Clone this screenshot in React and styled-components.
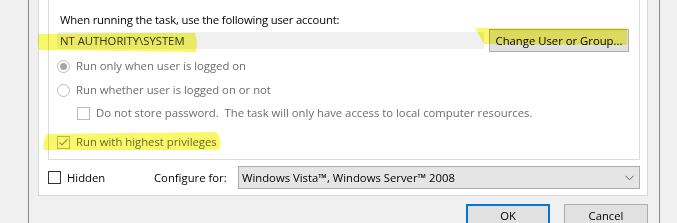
// Packages
import styled, { createGlobalStyle } from "styled-components";

const GlobalStyle = createGlobalStyle`
    body {
        margin: 0;
        background: #f0f0f0;
        font-family: "Segoe UI", "Open Sans", sans-serif;
        font-size: 11.3px;
        color: #000;
    }
`;

// Chevron for the combo box
const Chevron = () => (
    <svg width="9" height="6" viewBox="0 0 9 6">
        <path d="M0.5 0.8 L4.5 4.8 L8.5 0.8" fill="none" stroke="#606060" strokeWidth="1" />
    </svg>
);

// Check mark for a ticked box
const Tick = ({ color }) => (
    <svg width="11" height="11" viewBox="0 0 11 11">
        <path d="M1.5 5.5 L4 8 L9.5 2.2" fill="none" stroke={color} strokeWidth="1.2" />
    </svg>
);

// Yellow marker strokes laid over the dialog
const Highlights = () => (
    <Marker width="677" height="223" viewBox="0 0 677 223">
        <path d="M38 34 L120 33 L195 33 Q198 42 196 52 L120 51 L39 50 Q37 42 38 34 Z" />
        <path d="M475 28 L627 28 L627 45 L484 44 Z" />
        <path d="M47 134 L216 132 Q223 140 219 150 L44 150 Q42 142 47 134 Z" />
    </Marker>
);

export default function App() {
    return (
        <>
            <GlobalStyle />
            <Screen>
                <Window>
                    <TabPage>
                        <GroupBox>
                            <Heading>When running the task, use the following user account:</Heading>
                            <AccountRow>
                                <AccountField>NT AUTHORITY\SYSTEM</AccountField>
                                <Button $width="140px">Change User or Group...</Button>
                            </AccountRow>
                            <Option $top="6px" $disabled>
                                <Radio $checked />
                                Run only when user is logged on
                            </Option>
                            <Option $top="8px" $disabled>
                                <Radio />
                                Run whether user is logged on or not
                            </Option>
                            <Option $top="7px" $indent="20px" $disabled>
                                <Box $disabled />
                                Do not store password.&nbsp; The task will only have access to local computer resources.
                            </Option>
                            <Option $top="13px" $disabled>
                                <Box $disabled>
                                    <Tick color="#9a9a9a" />
                                </Box>
                                Run with highest privileges
                            </Option>
                        </GroupBox>
                        <BottomRow>
                            <Option>
                                <Box />
                                Hidden
                            </Option>
                            <span>Configure for:</span>
                            <Select>
                                Windows Vista™, Windows Server™ 2008
                                <Chevron />
                            </Select>
                        </BottomRow>
                    </TabPage>
                    <ButtonRow>
                        <Button $width="84px" $primary>OK</Button>
                        <Button $width="84px">Cancel</Button>
                    </ButtonRow>
                </Window>
                <Highlights />
            </Screen>
        </>
    );
}

const Screen = styled.div`
    position: relative;
    width: 677px;
    height: 223px;
    overflow: hidden;
    box-sizing: border-box;
    padding-left: 28px;
    background: #f0f0f0;
`;

const Window = styled.div`
    width: 632px;
    height: 100%;
    box-sizing: border-box;
    border-left: 1px solid #8a8a8a;
    border-right: 1px solid #8a8a8a;
    padding: 0 11px 0 9px;
    display: flex;
    flex-direction: column;
`;

const TabPage = styled.div`
    background: #fff;
    border: 1px solid #d9d9d9;
    border-top: none;
    padding: 0 7px 6px 9px;
`;

const GroupBox = styled.div`
    border: 1px solid #dcdcdc;
    border-top: none;
    padding: 11px 10px 9px 8px;
    display: flex;
    flex-direction: column;
`;

const Heading = styled.div`
    margin-left: 3px;
    height: 16px;
    line-height: 17px;
    letter-spacing: -0.18px;
`;

const AccountRow = styled.div`
    margin-top: 2px;
    display: flex;
    align-items: center;
    gap: 5px;
`;

const AccountField = styled.div`
    flex: 1;
    height: 17px;
    line-height: 17px;
    padding-left: 3px;
    background: #f0f0f0;
    color: #333;
`;

const Option = styled.div`
    margin-top: ${(p) => p.$top || "0"};
    margin-left: ${(p) => p.$indent || "0"};
    display: flex;
    align-items: center;
    gap: 6px;
    height: 16px;
    line-height: 16px;
    color: ${(p) => (p.$disabled ? "#6d6d6d" : "#000")};
    white-space: nowrap;
`;

const Radio = styled.span`
    width: 13px;
    height: 13px;
    box-sizing: border-box;
    border: 1px solid #bcbcbc;
    border-radius: 50%;
    background: #fff;
    display: grid;
    place-items: center;

    &::after {
        content: "";
        display: ${(p) => (p.$checked ? "block" : "none")};
        width: 7px;
        height: 7px;
        border-radius: 50%;
        background: #a6a6a6;
    }
`;

const Box = styled.span`
    width: 13px;
    height: 13px;
    box-sizing: border-box;
    border: 1px solid ${(p) => (p.$disabled ? "#bcbcbc" : "#333")};
    background: #fff;
    display: grid;
    place-items: center;
`;

const BottomRow = styled.div`
    margin-top: 6px;
    height: 23px;
    display: grid;
    grid-template-columns: 106px 84px 1fr;
    align-items: center;
`;

const Select = styled.div`
    height: 23px;
    box-sizing: border-box;
    border: 1px solid #adadad;
    background: #e5e5e5;
    padding: 0 5px 0 3px;
    display: flex;
    align-items: center;
    justify-content: space-between;
`;

const ButtonRow = styled.div`
    margin-top: 8px;
    display: flex;
    justify-content: flex-end;
    gap: 14px;
`;

const Button = styled.div`
    width: ${(p) => p.$width};
    height: 23px;
    box-sizing: border-box;
    border: ${(p) => (p.$primary ? "2px solid #0078d7" : "1px solid #adadad")};
    background: #e1e1e1;
    display: flex;
    align-items: center;
    justify-content: center;
    white-space: nowrap;
`;

const Marker = styled.svg`
    position: absolute;
    left: 0;
    top: 0;
    pointer-events: none;
    mix-blend-mode: multiply;
    fill: #f8f86a;
`;
